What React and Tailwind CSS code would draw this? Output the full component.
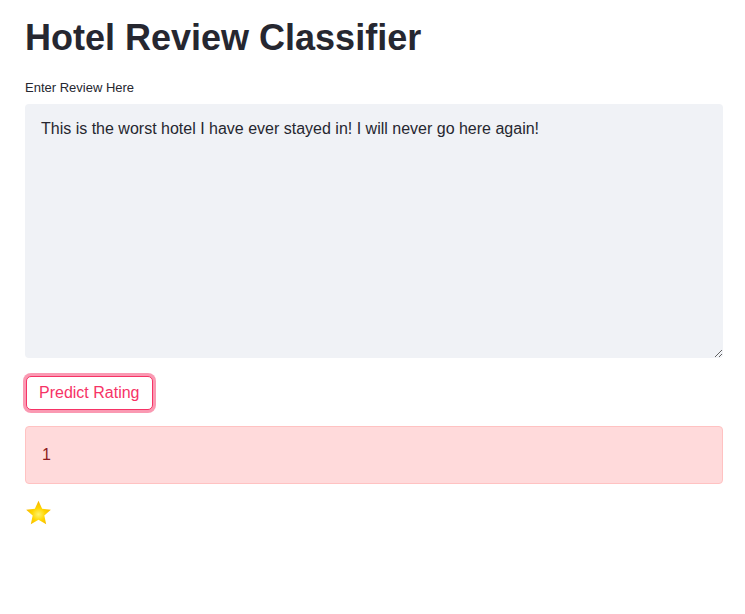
import { useState } from 'react';

function Star() {
  return (
    <svg width="27" height="26" viewBox="0 0 26 25">
      <defs>
        <radialGradient id="starFill" cx="50%" cy="58%" r="55%">
          <stop offset="0%" stopColor="#fff36b" />
          <stop offset="50%" stopColor="#ffd500" />
          <stop offset="100%" stopColor="#f7b500" />
        </radialGradient>
      </defs>
      <path
        d="M13 0.8l3.5 7.7 8.4.9-6.3 5.6 1.8 8.3L13 19l-7.4 4.3 1.8-8.3L1.1 9.4l8.4-.9z"
        fill="url(#starFill)"
        strokeLinejoin="round"
      />
    </svg>
  );
}

export default function App() {
  const [review, setReview] = useState('This is the worst hotel I have ever stayed in! I will never go here again!');

  return (
    <div className="min-h-screen bg-white text-[#262730]" style={{ fontFamily: '"Liberation Sans", Arial, sans-serif' }}>
      <div className="w-[698px] ml-[25px] pt-[16px] pb-10">
        <h1 className="text-[36px] font-bold leading-[1.2]">Hotel Review Classifier</h1>

        <label className="block mt-[21px] text-[13px] leading-4">Enter Review Here</label>
        <textarea
          value={review}
          onChange={(e) => setReview(e.target.value)}
          className="mt-[8px] block w-full h-[254px] rounded-[4px] bg-[#f0f2f6] px-4 pt-[13px] text-[16px] leading-6 text-[#262730] outline-none"
        />

        <button className="mt-[18px] h-[34px] px-[12px] ml-[1px] rounded-[5px] border border-[#f63366] bg-white text-[16px] text-[#f63366] shadow-[0_0_0_3px_rgba(246,51,102,0.5)]">
          Predict Rating
        </button>

        <div className="mt-[16px] h-[58px] flex items-center rounded-[4px] border border-[#ffc2c2] bg-[#ffdadb] px-4 text-[16px] text-[#8e1b22]">
          1
        </div>

        <div className="mt-[16px]">
          <Star />
        </div>
      </div>
    </div>
  );
}
